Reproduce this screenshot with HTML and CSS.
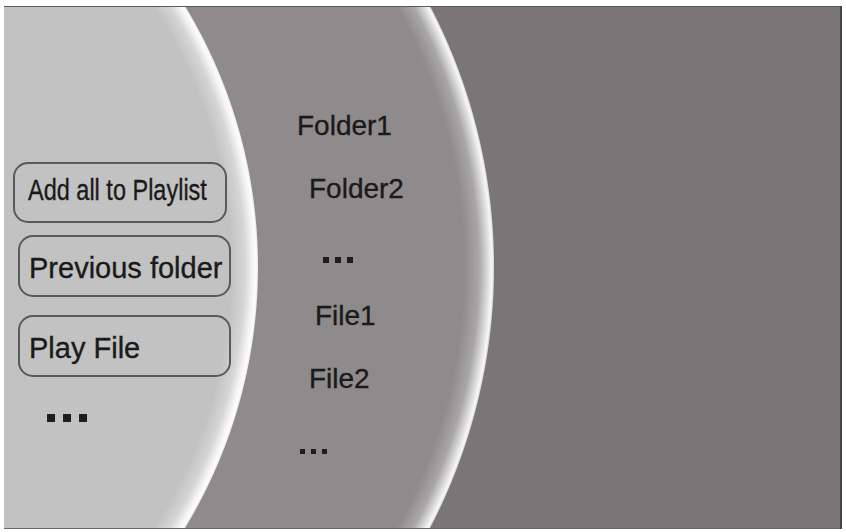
FILE: index.html
```html
<!DOCTYPE html>
<html>

<head>
  <title>Media Browser</title>
  <link rel="stylesheet" href="styles.css">
</head>

<body>
  <div id="screen">
    <!-- left arc: actions -->
    <div id="actions">
      <div class="btn btn-narrow"><span>Add all to Playlist</span></div>
      <div class="btn">Previous folder</div>
      <div class="btn">Play File</div>
      <div class="dots dots-big"><span></span><span></span><span></span></div>
    </div>

    <!-- middle arc: folder / file list -->
    <div id="browser">
      <div class="entry">Folder1</div>
      <div class="entry">Folder2</div>
      <div class="dots"><span></span><span></span><span></span></div>
      <div class="entry">File1</div>
      <div class="entry">File2</div>
      <div class="dots dots-small"><span></span><span></span><span></span></div>
    </div>
  </div>
</body>

</html>
```

FILE: styles.css
```css
body,
html {
  margin: 0;
  padding: 0;
  background: #fff;
}

#screen {
  display: flex;
  margin: 6px 0 0 4px;
  width: 838px;
  height: 523px;
  overflow: hidden;
  font-family: "Liberation Sans", Arial, sans-serif;
  color: #1a1a1a;
  -webkit-text-stroke: 0.35px #1a1a1a;
  /* two stacked arcs with a bright rim, dark panel behind */
  background:
    radial-gradient(circle 503px at -249px 261px,
      #c2c2c2 0, #c2c2c2 476px, #d6d6d6 490px, #f2f2f2 497px,
      #fdfdfd 501px, #ececec 502.5px, rgba(143, 139, 140, 0) 503.5px),
    radial-gradient(circle 564px at -74px 261px,
      #8f8b8c 0, #8f8b8c 534px, #a9a6a7 549px, #dedede 558px,
      #f8f8f8 562px, #dddddd 563.5px, rgba(122, 118, 119, 0) 564.5px),
    #7a7677;
  box-shadow: inset -2px 0 #454545, inset 0 1px #5a5a5a, inset 0 -1px #6a6a6a;
}

#actions {
  display: flex;
  flex-direction: column;
  width: 240px;
  padding-top: 156px;
}

.btn {
  box-sizing: border-box;
  width: 213px;
  height: 62px;
  margin: 12px 0 0 14px;
  padding: 15px 0 0 9px;
  border: 2px solid #5a5a5a;
  border-radius: 15px;
  font-size: 29px;
  line-height: 33px;
  white-space: nowrap;
}

.btn:nth-child(3) {
  margin-top: 18px;
}

.btn-narrow {
  width: 214px;
  height: 61px;
  margin: 0 0 0 9px;
  padding: 10px 0 0 13px;
}

.btn-narrow span {
  display: inline-block;
  transform: scaleX(0.81);
  transform-origin: 0 0;
}

.dots {
  display: flex;
  gap: 6px;
  height: 6px;
}

.dots span {
  width: 6px;
  height: 6px;
  background: #1d1d1d;
}

.dots-big {
  gap: 8px;
  height: 8px;
  margin: 37px 0 0 43px;
}

.dots-big span {
  width: 8px;
  height: 8px;
}

#browser {
  display: flex;
  flex-direction: column;
  margin-left: 50px;
  padding-top: 104px;
}

.entry {
  font-size: 28px;
  line-height: 32px;
}

.entry:nth-child(1) { margin-left: 3px; }
.entry:nth-child(2) { margin: 31px 0 0 15px; }
.dots:nth-child(3) { margin: 52px 0 0 29px; }
.entry:nth-child(4) { margin: 37px 0 0 21px; }
.entry:nth-child(5) { margin: 31px 0 0 15px; }

.dots-small {
  gap: 6px;
  height: 5px;
  margin: 54px 0 0 6px;
}

.dots-small span {
  width: 5px;
  height: 5px;
}
```
